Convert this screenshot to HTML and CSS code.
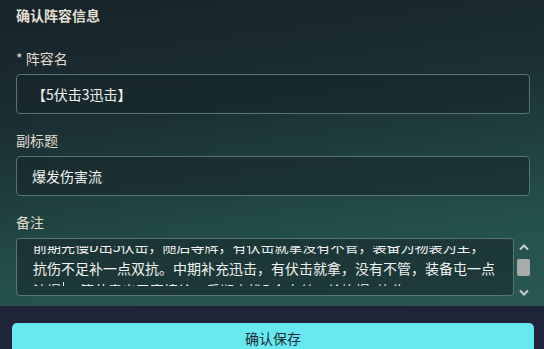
FILE: index.html
```html
<!DOCTYPE html>
<html lang="zh-CN">
<head>
    <meta charset="UTF-8">
    <meta name="viewport" content="width=device-width, initial-scale=1.0">
    <link rel="stylesheet" href="styles.css">
    <title>确认阵容信息</title>
</head>
<body>
    <div id="panel">
        <div class="title">确认阵容信息</div>

        <div class="field">
            <div class="label">* 阵容名</div>
            <div class="input">【5伏击3迅击】</div>
        </div>

        <div class="field">
            <div class="label">副标题</div>
            <div class="input">爆发伤害流</div>
        </div>

        <div class="field">
            <div class="label">备注</div>
            <div class="noteRow">
                <div class="noteBox">
                    <div class="noteClip">
                        <div class="noteText">
                            <div class="line">前期先慢D出5伏击，随后等牌，有伏击就拿没有不管，装备为物装为主，</div>
                            <div class="line">抗伤不足补一点双抗。中期补充迅击，有伏击就拿，没有不管，装备屯一点</div>
                            <div class="line">法爆<span class="caret"></span>，等节奏出了直接给，后期去找D金克丝，给饰爆+饰佐</div>
                        </div>
                    </div>
                </div>
                <div class="scrollbar">
                    <svg class="arrow" width="10" height="7" viewBox="0 0 10 7"><path d="M1 5.5 L5 1.5 L9 5.5" fill="none" stroke="#c9cccc" stroke-width="2"/></svg>
                    <div class="thumb"></div>
                    <svg class="arrow" width="10" height="7" viewBox="0 0 10 7"><path d="M1 1.5 L5 5.5 L9 1.5" fill="none" stroke="#c9cccc" stroke-width="2"/></svg>
                </div>
            </div>
        </div>
    </div>

    <div id="footer">
        <button class="saveBtn">确认保存</button>
    </div>
</body>
</html>
```

FILE: styles.css
```css
body{
    margin: 0;
    padding: 0;
    background-color: #1f2438;
    font-family: "Noto Sans CJK SC", "Noto Sans", sans-serif;
    overflow: hidden;
}

#panel{
    height: 306px;
    box-sizing: border-box;
    padding: 4px 14px 0 16px;
    overflow: hidden;
    background: linear-gradient(172deg, #17222a 0%, #1b2f34 35%, #245049 75%, #2a5854 100%);
}

.title{
    font-size: 14px;
    font-weight: bold;
    line-height: 22px;
    color: #e4dfcf;
    margin-bottom: 21px;
}

.field{
    margin-bottom: 15px;
}

.label{
    font-size: 14px;
    line-height: 22px;
    color: #e0dccd;
    margin-bottom: 5px;
}

.input{
    height: 40px;
    box-sizing: border-box;
    border: 1px solid #587576;
    border-radius: 4px;
    background-color: rgba(24, 38, 44, 0.6);
    padding: 0 15px;
    font-size: 14px;
    line-height: 38px;
    color: #f2f2f0;
}

.noteRow{
    display: flex;
    gap: 3px;
}

.noteBox{
    width: 498px;
    box-sizing: border-box;
    height: 58px;
    border: 1px solid #587576;
    border-radius: 4px;
    background-color: rgba(24, 38, 44, 0.6);
    padding: 7px 16px 9px 16px;
}

.noteClip{
    height: 40px;
    overflow: hidden;
}

.noteText{
    margin-top: -11px;
    font-size: 14px;
    line-height: 22px;
    color: #f2f2f0;
    white-space: nowrap;
}

.caret{
    display: inline-block;
    width: 1px;
    height: 16px;
    margin: 0 2px;
    vertical-align: -2px;
    background-color: #f2f2f0;
}

.scrollbar{
    width: 13px;
    display: flex;
    flex-direction: column;
    align-items: center;
    padding-top: 6px;
}

.arrow{
    display: block;
}

.thumb{
    width: 13px;
    height: 17px;
    margin: 8px 0 13px 0;
    border-radius: 2px;
    background-color: #a9abab;
}

#footer{
    height: 43px;
    padding: 17px 10px 0 12px;
    box-sizing: border-box;
    overflow: hidden;
}

.saveBtn{
    display: block;
    width: 522px;
    height: 40px;
    border: none;
    border-radius: 5px;
    background-color: #67e8f1;
    color: #1c2b34;
    font-family: "Noto Sans CJK SC", "Noto Sans", sans-serif;
    font-size: 14px;
    line-height: 30px;
    padding: 0 0 10px 0;
    cursor: pointer;
}
```
